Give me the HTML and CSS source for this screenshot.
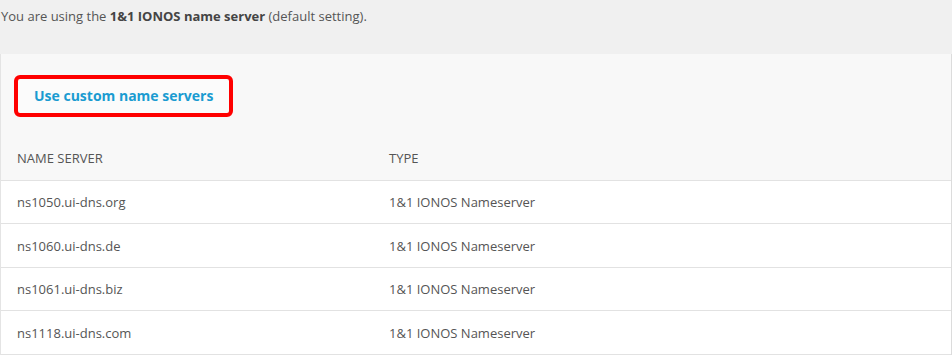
FILE: index.html
```html
<!DOCTYPE html>
<html>
<head>
<meta charset="utf-8">
<link rel="stylesheet" href="styles.css">
</head>
<body>
<p class="intro">You are using the <b>1&amp;1 IONOS name server</b> (default setting).</p>
<section class="panel">
  <div class="actions">
    <a class="custom-link" href="#">Use custom name servers</a>
  </div>
  <div class="table">
    <div class="row head">
      <div class="cell name">NAME SERVER</div>
      <div class="cell">TYPE</div>
    </div>
    <div class="row">
      <div class="cell name">ns1050.ui-dns.org</div>
      <div class="cell">1&amp;1 IONOS Nameserver</div>
    </div>
    <div class="row">
      <div class="cell name">ns1060.ui-dns.de</div>
      <div class="cell">1&amp;1 IONOS Nameserver</div>
    </div>
    <div class="row">
      <div class="cell name">ns1061.ui-dns.biz</div>
      <div class="cell">1&amp;1 IONOS Nameserver</div>
    </div>
    <div class="row">
      <div class="cell name">ns1118.ui-dns.com</div>
      <div class="cell">1&amp;1 IONOS Nameserver</div>
    </div>
  </div>
</section>
</body>
</html>
```

FILE: styles.css
```css
* { box-sizing: border-box; }
html, body {
  margin: 0;
  padding: 0;
  background: #f0f0f0;
  font-family: "Open Sans", "Liberation Sans", sans-serif;
  font-size: 13px;
  color: #555;
}
.intro {
  margin: 0;
  padding: 7px 0 0 1px;
  height: 54px;
  line-height: 18px;
  color: #555;
}
.intro b { color: #444; font-weight: 700; }
.panel {
  background: #f8f8f8;
  border-left: 1px solid #e4e4e4;
  border-right: 1px solid #dcdcdc;
  width: 952px;
}
.actions {
  padding: 21px 0 19px 13px;
}
.custom-link {
  display: inline-block;
  height: 42px;
  line-height: 34px;
  padding: 0 16px;
  border: 4px solid #f00;
  border-radius: 6px;
  background: #fbfbfb;
  color: #1a9bd1;
  font-weight: 700;
  text-decoration: none;
  font-size: 14px;
}
.table {
  display: flex;
  flex-direction: column;
}
.row {
  display: grid;
  grid-template-columns: 372px 1fr;
  height: 43.5px;
  align-items: center;
  background: #fff;
  border-bottom: 1px solid #e2e2e2;
  padding: 1px 0 0 16px;
}
.row.head {
  background: #f8f8f8;
  height: 44.5px;
  color: #555;
  font-size: 13px;
}
.cell { white-space: nowrap; }
```
